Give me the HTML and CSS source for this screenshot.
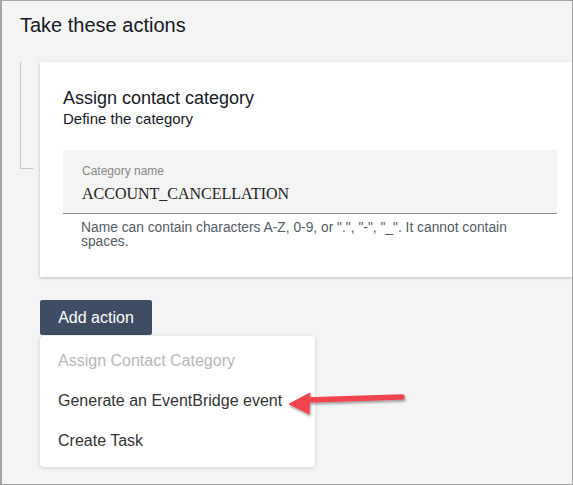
FILE: index.html
```html
<!DOCTYPE html>
<html>
<head>
<meta charset="utf-8">
<link rel="stylesheet" href="styles.css">
</head>
<body>
<div class="frame">
  <h1 class="heading">Take these actions</h1>
  <div class="section">
    <div class="connector"><div class="connector-line"></div></div>
    <div class="card">
      <h2 class="card-title">Assign contact category</h2>
      <p class="card-sub">Define the category</p>
      <div class="field">
        <div class="field-label">Category name</div>
        <div class="field-value">ACCOUNT_CANCELLATION</div>
      </div>
      <p class="field-help">Name can contain characters A-Z, 0-9, or ".", "-", "_". It cannot contain spaces.</p>
    </div>
  </div>
  <div class="actions">
    <button class="btn">Add action</button>
    <ul class="menu">
      <li class="menu-item disabled">Assign Contact Category</li>
      <li class="menu-item">Generate an EventBridge event</li>
      <li class="menu-item">Create Task</li>
    </ul>
  </div>
  <svg class="arrow" width="140" height="40" viewBox="0 0 140 40">
    <defs>
      <filter id="sh" x="-20%" y="-50%" width="140%" height="200%">
        <feDropShadow dx="1" dy="2" stdDeviation="1.2" flood-color="#000" flood-opacity="0.35"/>
      </filter>
    </defs>
    <g filter="url(#sh)" fill="#f0444d" stroke="#f0444d">
      <line x1="24" y1="18" x2="120" y2="15" stroke-width="5.5" stroke-linecap="round"/>
      <polygon points="7,22 28,11 27,32" stroke-width="1" stroke-linejoin="round"/>
    </g>
  </svg>
</div>
</body>
</html>
```
FILE: styles.css
```css
html, body {
  margin: 0;
  padding: 0;
}
body {
  font-family: "Liberation Sans", Arial, sans-serif;
  background: #ffffff;
}
.frame {
  position: relative;
  box-sizing: border-box;
  width: 573px;
  height: 485px;
  border: 1px solid #a3a3a3;
  border-left-width: 2px;
  background: #f4f4f4;
  overflow: hidden;
}
.heading {
  margin: 0;
  padding: 13px 0 0 18px;
  height: 48px;
  font-size: 20px;
  font-weight: normal;
  line-height: 22px;
  color: #16191f;
}
.section {
  display: flex;
}
.connector {
  width: 38px;
  flex: none;
}
.connector-line {
  margin-left: 18px;
  width: 12px;
  height: 106px;
  border-left: 1px solid #c6c6c6;
  border-bottom: 1px solid #c6c6c6;
}
.card {
  flex: 1;
  background: #ffffff;
  box-shadow: 0 1px 3px rgba(0, 0, 0, 0.22);
  padding: 25px 15px 28px 23px;
}
.card-title {
  margin: 0;
  font-size: 18px;
  font-weight: normal;
  line-height: 22px;
  color: #16191f;
}
.card-sub {
  margin: 1px 0 0;
  font-size: 15px;
  line-height: 17px;
  color: #16191f;
}
.field {
  margin-top: 23px;
  background: #f4f4f4;
  border-bottom: 1px solid #8c8c8c;
  padding: 14px 18px 9px 19px;
}
.field-label {
  font-size: 12px;
  line-height: 14px;
  color: #888888;
}
.field-value {
  margin-top: 6px;
  font-family: "Liberation Serif", "Times New Roman", serif;
  font-size: 16px;
  line-height: 20px;
  color: #222222;
}
.field-help {
  margin: 7px 0 0;
  padding: 0 18px 0 18px;
  font-size: 13.8px;
  line-height: 14px;
  color: #545b64;
}
.actions {
  padding: 23px 0 0 38px;
}
.btn {
  display: block;
  margin: 0;
  border: none;
  border-radius: 2px;
  background: #3e4d63;
  color: #ffffff;
  font-family: "Liberation Sans", Arial, sans-serif;
  font-size: 16px;
  width: 112px;
  height: 35px;
  padding: 0;
  text-align: center;
}
.menu {
  list-style: none;
  margin: 1px 0 0;
  padding: 5px 0 6px;
  width: 275px;
  background: #ffffff;
  border-radius: 4px;
  box-shadow: 0 1px 4px rgba(0, 0, 0, 0.15);
}
.menu-item {
  height: 40px;
  line-height: 40px;
  padding-left: 18px;
  font-size: 16px;
  color: #333333;
}
.menu-item.disabled {
  color: #b8b8b8;
}
.arrow {
  position: absolute;
  left: 280px;
  top: 381px;
}
```
